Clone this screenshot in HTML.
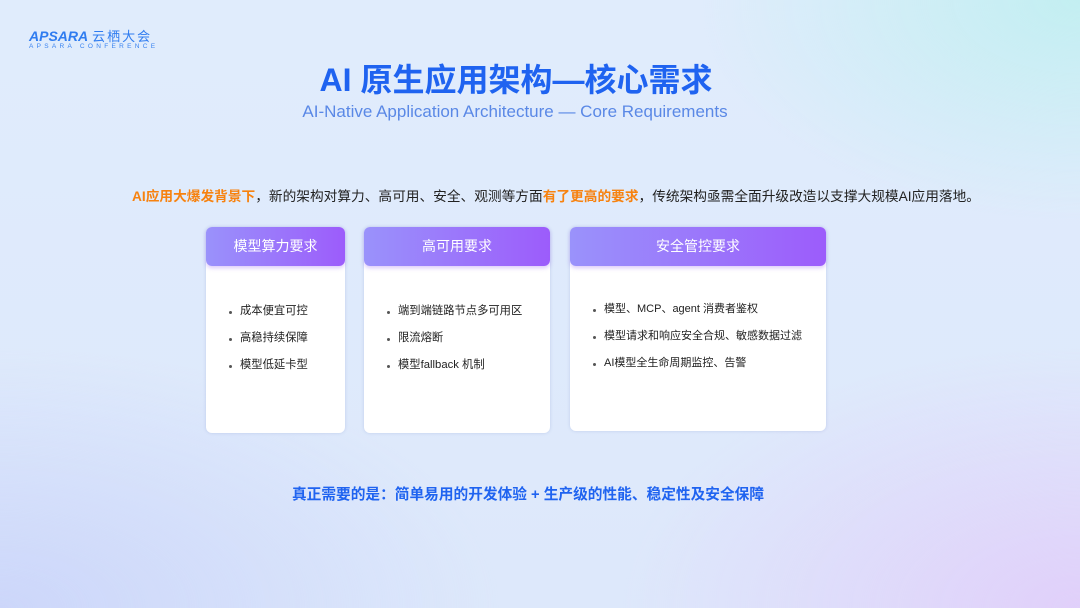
<!DOCTYPE html>
<html><head><meta charset="utf-8"><style>
*{margin:0;padding:0;box-sizing:border-box}
body{width:1080px;height:608px;overflow:hidden;position:relative;font-family:"Liberation Sans","Noto Sans CJK SC",sans-serif;
background:
radial-gradient(ellipse 380px 220px at 1080px 0px,rgba(185,240,238,.75),rgba(185,240,238,0)),
radial-gradient(ellipse 460px 260px at 1080px 608px,rgba(225,205,250,.9),rgba(225,205,250,0)),
radial-gradient(ellipse 500px 260px at 0px 608px,rgba(200,210,250,.8),rgba(200,210,250,0)),
linear-gradient(180deg,#e0ecfc,#dde8fb);}
.abs{position:absolute}
.logo{left:29px;top:26px;color:#2f7cf0;font-weight:bold;font-style:italic;font-size:14px;letter-spacing:0}
.logo span{font-style:normal;font-weight:normal;font-size:13px;margin-left:4px;letter-spacing:2px}
.sub{left:29px;top:43px;color:#3b84f0;font-size:6.5px;letter-spacing:3.3px}
.title{left:-24px;width:1080px;top:55px;text-align:center;color:#1f63f0;font-size:32px;font-weight:bold}
.en{left:-25px;width:1080px;top:102px;text-align:center;color:#5a88e6;font-size:17px}
.intro{left:16px;width:1080px;top:185px;text-align:center;color:#222;font-size:13.7px}
.intro b{color:#f7820f}
.card{position:absolute;background:#fff;border-radius:6px;box-shadow:0 0 3px rgba(120,140,200,.3)}
.hd{height:39px;border-radius:6px;background:linear-gradient(90deg,#9a92fb,#9c5cfb);color:#fff;font-size:14px;text-align:center;line-height:39px;box-shadow:0 2px 4px rgba(150,100,240,.35)}
ul{list-style:none;font-size:11.3px;color:#222}
li{position:relative;padding-left:34px;line-height:27px}
li:before{content:"";position:absolute;left:23px;top:13px;width:3px;height:3px;border-radius:50%;background:#555}
.bottom{left:-12px;width:1080px;top:483px;text-align:center;color:#1f63f0;font-size:14.7px;font-weight:bold}
</style></head><body>
<div class="abs logo">APSARA<span>云栖大会</span></div>
<div class="abs sub">APSARA CONFERENCE</div>
<div class="abs title">AI 原生应用架构—核心需求</div>
<div class="abs en">AI-Native Application Architecture — Core Requirements</div>
<div class="abs intro"><b>AI应用大爆发背景下</b>，新的架构对算力、高可用、安全、观测等方面<b>有了更高的要求</b>，传统架构亟需全面升级改造以支撑大规模AI应用落地。</div>
<div class="card" style="left:206px;top:227px;width:139px;height:206px"><div class="hd">模型算力要求</div>
<ul style="margin-top:32px"><li>成本便宜可控</li><li>高稳持续保障</li><li>模型低延卡型</li></ul></div>
<div class="card" style="left:364px;top:227px;width:186px;height:206px"><div class="hd">高可用要求</div>
<ul style="margin-top:32px"><li>端到端链路节点多可用区</li><li>限流熔断</li><li>模型fallback 机制</li></ul></div>
<div class="card" style="left:570px;top:227px;width:256px;height:204px"><div class="hd">安全管控要求</div>
<ul style="margin-top:30px;font-size:11px"><li>模型、MCP、agent 消费者鉴权</li><li>模型请求和响应安全合规、敏感数据过滤</li><li>AI模型全生命周期监控、告警</li></ul></div>
<div class="abs bottom">真正需要的是：简单易用的开发体验 + 生产级的性能、稳定性及安全保障</div>
</body></html>
